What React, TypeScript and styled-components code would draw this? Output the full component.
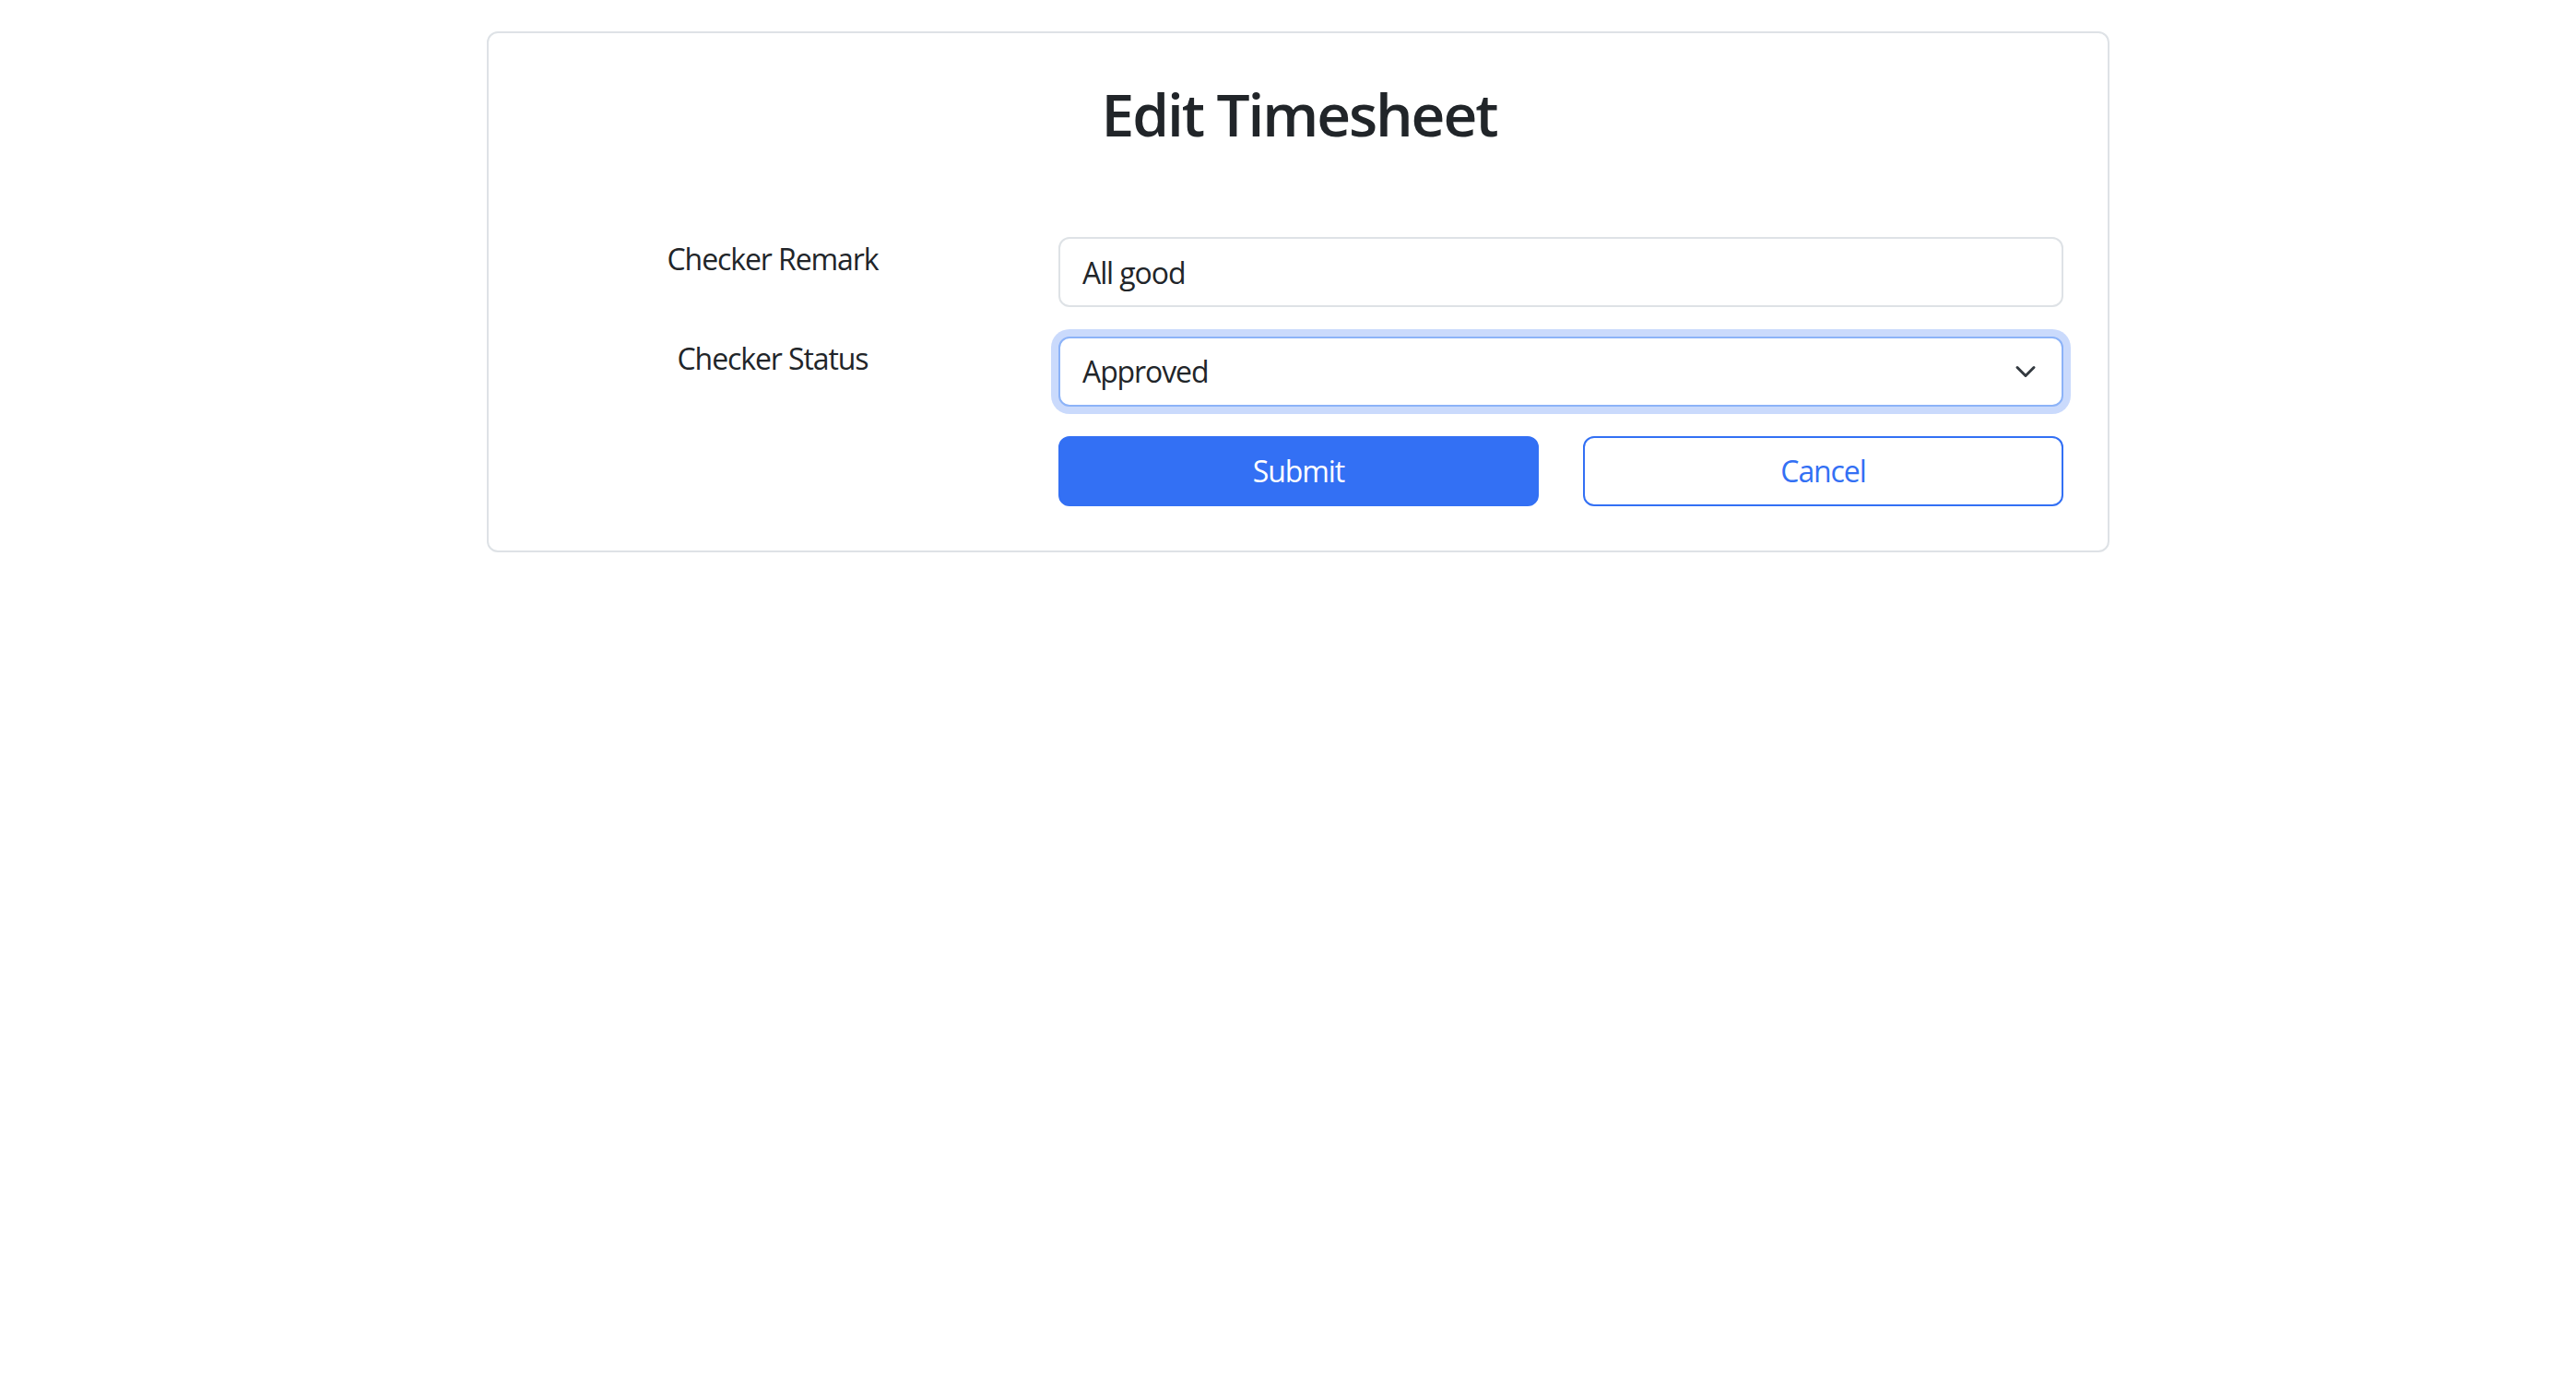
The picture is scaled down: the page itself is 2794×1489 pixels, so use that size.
import React from "react";
import styled, { createGlobalStyle } from "styled-components";

const GlobalStyle = createGlobalStyle`
  html, body {
    margin: 0;
    padding: 0;
    background: #ffffff;
  }
  body {
    font-family: "Open Sans", "Noto Sans", Arial, sans-serif;
    color: #212529;
  }
  * { box-sizing: border-box; }
`;

const Page = styled.div`
  padding: 34px 0 0 528px;
`;

const Card = styled.section`
  width: 1760px;
  border: 2px solid #dee2e6;
  border-radius: 12px;
  background: #ffffff;
  padding: 49px 48px 48px 47px;
`;

const Title = styled.h2`
  margin: 0 0 95px 0;
  text-align: center;
  font-family: "Open Sans", "Noto Sans", sans-serif;
  font-size: 64px;
  line-height: 77px;
  font-weight: 600;
  letter-spacing: -2.1px;
  color: #212529;
  padding-left: 3px;
`;

const Form = styled.form`
  display: flex;
  flex-direction: column;
  gap: 32px;
`;

const Row = styled.div`
  display: grid;
  grid-template-columns: 522px 1090px;
  column-gap: 49px;
  align-items: start;
`;

const Label = styled.label`
  display: block;
  text-align: center;
  font-size: 32px;
  line-height: 48px;
  letter-spacing: -1.1px;
  color: #212529;
`;

const fieldBase = `
  display: block;
  width: 100%;
  height: 76px;
  margin: 0;
  padding: 12px 24px;
  font-family: "Open Sans", "Noto Sans", sans-serif;
  font-size: 32px;
  line-height: 48px;
  letter-spacing: -1.1px;
  color: #212529;
  background: #ffffff;
  border-radius: 12px;
  outline: none;
`;

const TextInput = styled.input`
  ${fieldBase}
  border: 2px solid #dee2e6;
`;

const SelectWrap = styled.div`
  position: relative;
`;

const Select = styled.select<{ $focused?: boolean }>`
  ${fieldBase}
  appearance: none;
  -webkit-appearance: none;
  padding-right: 72px;
  border: 2px solid ${(p) => (p.$focused ? "#8cb3f8" : "#dee2e6")};
  box-shadow: ${(p) =>
    p.$focused ? "0 0 0 8px rgba(51, 112, 244, 0.26)" : "none"};
`;

const Chevron = styled.svg`
  position: absolute;
  right: 29px;
  top: 26px;
  width: 24px;
  height: 24px;
  pointer-events: none;
`;

const ButtonGrid = styled.div`
  display: grid;
  grid-template-columns: 1fr 1fr;
  column-gap: 48px;
`;

const Button = styled.button<{ $variant: "primary" | "outline" }>`
  height: 76px;
  padding: 12px 24px;
  font-family: "Open Sans", "Noto Sans", sans-serif;
  font-size: 32px;
  line-height: 48px;
  letter-spacing: -1.1px;
  border-radius: 12px;
  border: 2px solid #3370f4;
  cursor: pointer;
  background: ${(p) => (p.$variant === "primary" ? "#3370f4" : "#ffffff")};
  color: ${(p) => (p.$variant === "primary" ? "#ffffff" : "#3370f4")};
`;

const Spacer = styled.div``;

export default function App() {
  return (
    <>
      <GlobalStyle />
      <Page>
        <Card>
          <Title>Edit Timesheet</Title>
          <Form onSubmit={(e) => e.preventDefault()}>
            <Row>
              <Label htmlFor="remark">Checker Remark</Label>
              <TextInput id="remark" type="text" defaultValue="All good" />
            </Row>
            <Row>
              <Label htmlFor="status">Checker Status</Label>
              <SelectWrap>
                <Select id="status" defaultValue="Approved" $focused>
                  <option value="Pending">Pending</option>
                  <option value="Approved">Approved</option>
                  <option value="Rejected">Rejected</option>
                </Select>
                <Chevron viewBox="0 0 16 16" aria-hidden="true">
                  <path
                    d="M2 5l6 6 6-6"
                    fill="none"
                    stroke="#343a40"
                    strokeWidth="2"
                    strokeLinecap="round"
                    strokeLinejoin="round"
                  />
                </Chevron>
              </SelectWrap>
            </Row>
            <Row>
              <Spacer />
              <ButtonGrid>
                <Button type="submit" $variant="primary">
                  Submit
                </Button>
                <Button type="button" $variant="outline">
                  Cancel
                </Button>
              </ButtonGrid>
            </Row>
          </Form>
        </Card>
      </Page>
    </>
  );
}
